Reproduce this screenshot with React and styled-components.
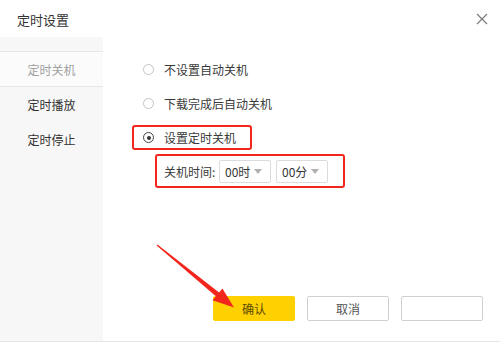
import React from 'react'
import styled, { createGlobalStyle } from 'styled-components'

const GlobalStyle = createGlobalStyle`
  html, body {
    margin: 0;
    padding: 0;
    background: #fff;
  }
  body {
    font-family: "Noto Sans CJK SC", "Noto Sans", sans-serif;
    color: #333;
  }
`

const Dialog = styled.div`
  position: relative;
  width: 500px;
  height: 343px;
  display: flex;
  flex-direction: column;
  background: #fff;
  overflow: hidden;
`

const Header = styled.div`
  height: 37px;
  flex: none;
  display: flex;
  align-items: center;
  justify-content: space-between;
  padding: 0 11px 0 17px;
  box-sizing: border-box;
`

const Title = styled.div`
  font-size: 13px;
  color: #333;
  padding-top: 2px;
`

const CloseButton = styled.div`
  width: 14px;
  height: 14px;
  display: flex;
  align-items: center;
  justify-content: center;
  margin-top: 1px;
`

const Body = styled.div`
  height: 304px;
  display: flex;
  border-bottom: 1px solid #e6e6e6;
`

const Sidebar = styled.div`
  width: 103px;
  flex: none;
  background: #f7f7f7;
  padding-top: 14px;
  box-sizing: border-box;
`

const NavItem = styled.div`
  height: ${({ active }) => (active ? 36 : 35)}px;
  box-sizing: border-box;
  display: flex;
  align-items: center;
  justify-content: center;
  font-size: 12px;
  color: ${({ active }) => (active ? '#a0a0a0' : '#333')};
  background: ${({ active }) => (active ? '#fbfbfb' : 'transparent')};
  border-top: 1px solid ${({ active }) => (active ? '#e6e6e6' : 'transparent')};
  border-bottom: 1px solid ${({ active }) => (active ? '#e6e6e6' : 'transparent')};
`

const Main = styled.div`
  flex: 1;
  display: flex;
  flex-direction: column;
  align-items: flex-start;
  padding: 20px 0 0 29px;
`

const OptionRow = styled.div`
  height: 25px;
  box-sizing: border-box;
  display: flex;
  align-items: center;
  gap: 10px;
  padding: 0 14px 0 9px;
  margin-bottom: 9px;
  border: 2px solid ${({ marked }) => (marked ? '#f2261d' : 'transparent')};
  border-radius: 3px;
  font-size: 12px;
  color: #3a3a3a;
`

const Radio = styled.span`
  width: 11px;
  height: 11px;
  box-sizing: border-box;
  border-radius: 50%;
  border: 1px solid ${({ checked }) => (checked ? '#444' : '#c4c4c4')};
  display: flex;
  align-items: center;
  justify-content: center;

  &::after {
    content: '';
    display: ${({ checked }) => (checked ? 'block' : 'none')};
    width: 4px;
    height: 4px;
    border-radius: 50%;
    background: #333;
  }
`

const TimeBox = styled.div`
  width: 190px;
  height: 34px;
  box-sizing: border-box;
  margin: -5px 0 0 23px;
  display: flex;
  align-items: center;
  padding-left: 7px;
  border: 2px solid #f2261d;
  border-radius: 3px;
  font-size: 12px;
`

const TimeLabel = styled.span`
  width: 55px;
  color: #3a3a3a;
`

const Select = styled.div`
  width: 52px;
  height: 23px;
  box-sizing: border-box;
  border: 1px solid #dcdcdc;
  border-radius: 2px;
  display: flex;
  align-items: center;
  justify-content: space-between;
  padding: 0 8px 0 5px;
  margin-right: 5px;
  color: #333;
  font-size: 12px;
`

const Caret = styled.span`
  width: 0;
  height: 0;
  border-left: 4px solid transparent;
  border-right: 4px solid transparent;
  border-top: 5px solid #b0b0b0;
`

const Footer = styled.div`
  margin-top: auto;
  align-self: stretch;
  display: flex;
  justify-content: flex-end;
  gap: 12px;
  padding: 0 17px 20px 0;
`

const Button = styled.div`
  width: 82px;
  height: 25px;
  box-sizing: border-box;
  display: flex;
  align-items: center;
  justify-content: center;
  font-size: 12px;
  border-radius: 2px;
  color: ${({ primary }) => (primary ? '#5c4b00' : '#555')};
  background: ${({ primary }) => (primary ? '#ffd100' : '#fff')};
  border: 1px solid ${({ primary }) => (primary ? '#ffd100' : '#d0d0d0')};
`

const Annotation = styled.svg`
  position: absolute;
  left: 0;
  top: 0;
  pointer-events: none;
`

const navItems = [
  { label: '定时关机', active: true },
  { label: '定时播放' },
  { label: '定时停止' },
]

const options = [
  { label: '不设置自动关机' },
  { label: '下载完成后自动关机' },
  { label: '设置定时关机', checked: true, marked: true },
]

export default function App() {
  return (
    <>
      <GlobalStyle />
      <Dialog>
        <Header>
          <Title>定时设置</Title>
          <CloseButton>
            <svg width="12" height="12" viewBox="0 0 12 12">
              <path d="M1 1 L11 11 M11 1 L1 11" stroke="#777" strokeWidth="1.1" fill="none" />
            </svg>
          </CloseButton>
        </Header>
        <Body>
          <Sidebar>
            {navItems.map(({ label, active }) => (
              <NavItem key={label} active={active}>
                {label}
              </NavItem>
            ))}
          </Sidebar>
          <Main>
            {options.map(({ label, checked, marked }) => (
              <OptionRow key={label} marked={marked}>
                <Radio checked={checked} />
                {label}
              </OptionRow>
            ))}
            <TimeBox>
              <TimeLabel>关机时间:</TimeLabel>
              <Select>
                00时
                <Caret />
              </Select>
              <Select>
                00分
                <Caret />
              </Select>
            </TimeBox>
            <Footer>
              <Button primary>确认</Button>
              <Button>取消</Button>
              <Button />
            </Footer>
          </Main>
        </Body>
        <Annotation width="500" height="343" viewBox="0 0 500 343">
          <polygon
            points="156.6,245.5 215.9,296.3 212.6,300.2 234,307.5 222.4,288.6 219.1,292.5 157.4,244.5"
            fill="#f2261d"
          />
        </Annotation>
      </Dialog>
    </>
  )
}
